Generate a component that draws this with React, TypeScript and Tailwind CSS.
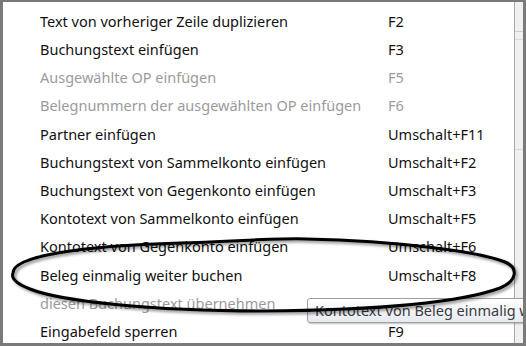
import React from "react";

type Item = { label: string; key: string; disabled?: boolean };

const items: Item[] = [
  { label: "Text von vorheriger Zeile duplizieren", key: "F2" },
  { label: "Buchungstext einfügen", key: "F3" },
  { label: "Ausgewählte OP einfügen", key: "F5", disabled: true },
  { label: "Belegnummern der ausgewählten OP einfügen", key: "F6", disabled: true },
  { label: "Partner einfügen", key: "Umschalt+F11" },
  { label: "Buchungstext von Sammelkonto einfügen", key: "Umschalt+F2" },
  { label: "Buchungstext von Gegenkonto einfügen", key: "Umschalt+F3" },
  { label: "Kontotext von Sammelkonto einfügen", key: "Umschalt+F5" },
  { label: "Kontotext von Gegenkonto einfügen", key: "Umschalt+F6" },
  { label: "Beleg einmalig weiter buchen", key: "Umschalt+F8" },
  { label: "diesen Buchungstext übernehmen", key: "", disabled: true },
  { label: "Eingabefeld sperren", key: "F9" },
];

export default function App() {
  return (
    <div
      className="relative flex w-[526px] h-[346px] overflow-hidden border-t-2 border-l-[3px] border-r-[3px] border-b-[3px] border-[#7a7a7a] bg-white"
      style={{ fontFamily: '"Noto Sans", "Open Sans", sans-serif' }}
    >
      <div className="w-[512px] h-full shrink-0 bg-white border-r border-[#a8a8a8] pt-[5px]">
        {items.map((it, i) => (
          <div
            key={i}
            className={`flex items-center h-[28.2px] pl-[37px] text-[14.5px] leading-none ${
              it.disabled ? "text-[#9b9b9b]" : "text-[#111111]"
            }`}
          >
            <span className="w-[348px] shrink-0 whitespace-nowrap">{it.label}</span>
            <span className="whitespace-nowrap">{it.key}</span>
          </div>
        ))}
      </div>
      <div className="flex-1 h-full bg-[#f0f0f0] flex flex-col">
        <div className="h-[30px] border-b border-[#d0d0d0]" />
        <div className="h-[8px] border-b border-[#dcdcdc]" />
        <div className="h-[110px] border-b border-[#d8d8d8]" />
        <div className="flex-1" />
      </div>

      {/* tooltip */}
      <div className="absolute left-[304px] top-[296px] w-[240px] h-[25px] rounded-[3px] border border-[#a0a0a0] bg-gradient-to-b from-white to-[#e6eaf2] flex items-center pl-[7px] text-[14.5px] text-[#3a3a3a] whitespace-nowrap shadow-[1px_1px_2px_rgba(0,0,0,0.25)]">
        Kontotext von Beleg einmalig weiter buchen
      </div>

      {/* hand-drawn ellipse */}
      <svg
        className="absolute left-[-3px] top-[-2px] pointer-events-none"
        width="526"
        height="346"
        viewBox="0 0 526 346"
      >
        <defs>
          <filter id="sh" x="-10%" y="-30%" width="120%" height="160%">
            <feGaussianBlur in="SourceAlpha" stdDeviation="1.6" />
            <feOffset dx="1.5" dy="2" result="b" />
            <feComponentTransfer>
              <feFuncA type="linear" slope="0.45" />
            </feComponentTransfer>
            <feMerge>
              <feMergeNode />
              <feMergeNode in="SourceGraphic" />
            </feMerge>
          </filter>
        </defs>
        <path
          d="M 13 273 C 13 256, 80 246, 180 243 C 240 241, 280 238, 306 239 C 400 241, 480 252, 505 262 C 519 268, 517 281, 500 288 C 462 302, 380 310, 263 311 C 150 311, 60 301, 30 289 C 15 283, 11 278, 13 273 Z"
          fill="none"
          stroke="#000"
          strokeWidth="3"
          strokeLinejoin="round"
          filter="url(#sh)"
        />
      </svg>
    </div>
  );
}
